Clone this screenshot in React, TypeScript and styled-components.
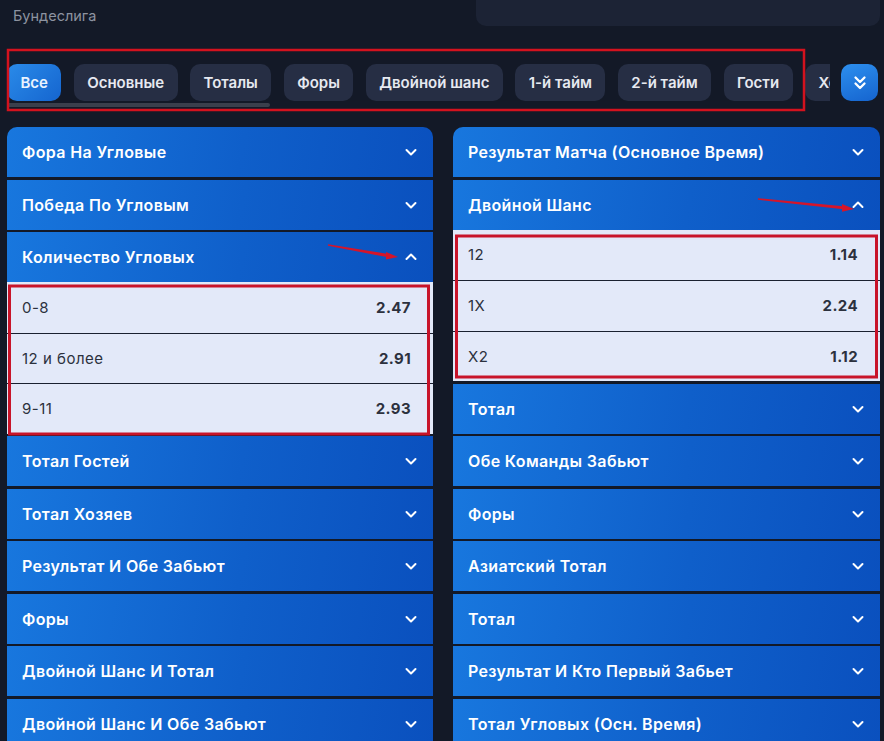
import React from 'react';
import styled, { createGlobalStyle } from 'styled-components';

const GlobalStyle = createGlobalStyle`
  html, body {
    margin: 0;
    padding: 0;
    background: #131927;
  }
  body {
    font-family: Inter, "Noto Sans", "Liberation Sans", sans-serif;
    overflow: hidden;
  }
  * {
    box-sizing: border-box;
  }
`;

type Option = { label: string; odds: string };
type Market = { title: string; open?: boolean; options?: Option[] };

const chips = ['Все', 'Основные', 'Тоталы', 'Форы', 'Двойной шанс', '1-й тайм', '2-й тайм', 'Гости', 'Хозяева'];

const leftMarkets: Market[] = [
  { title: 'Фора На Угловые' },
  { title: 'Победа По Угловым' },
  {
    title: 'Количество Угловых',
    open: true,
    options: [
      { label: '0-8', odds: '2.47' },
      { label: '12 и более', odds: '2.91' },
      { label: '9-11', odds: '2.93' }
    ]
  },
  { title: 'Тотал Гостей' },
  { title: 'Тотал Хозяев' },
  { title: 'Результат И Обе Забьют' },
  { title: 'Форы' },
  { title: 'Двойной Шанс И Тотал' },
  { title: 'Двойной Шанс И Обе Забьют' }
];

const rightMarkets: Market[] = [
  { title: 'Результат Матча (Основное Время)' },
  {
    title: 'Двойной Шанс',
    open: true,
    options: [
      { label: '12', odds: '1.14' },
      { label: '1X', odds: '2.24' },
      { label: 'X2', odds: '1.12' }
    ]
  },
  { title: 'Тотал' },
  { title: 'Обе Команды Забьют' },
  { title: 'Форы' },
  { title: 'Азиатский Тотал' },
  { title: 'Тотал' },
  { title: 'Результат И Кто Первый Забьет' },
  { title: 'Тотал Угловых (Осн. Время)' }
];

const Chevron = ({ up }: { up?: boolean }) => (
  <svg width="12" height="8" viewBox="0 0 12 8" fill="none">
    <path
      d={up ? 'M1.5 6l4.5-4.5 4.5 4.5' : 'M1.5 2l4.5 4.5 4.5-4.5'}
      stroke="#fff"
      strokeWidth="2"
      strokeLinecap="round"
      strokeLinejoin="round"
    />
  </svg>
);

const DoubleChevron = () => (
  <svg width="16" height="18" viewBox="0 0 16 18" fill="none">
    <path
      d="M3.5 3.5l4.5 4.5 4.5-4.5M3.5 9.5l4.5 4.5 4.5-4.5"
      stroke="#fff"
      strokeWidth="2.3"
      strokeLinecap="round"
      strokeLinejoin="round"
    />
  </svg>
);

const App = () => {
  const renderColumn = (markets: Market[]) => (
    <Column>
      {markets.map((m, i) => (
        <MarketBlock key={i}>
          <MarketHeader first={i === 0}>
            <span>{m.title}</span>
            <Chevron up={m.open} />
          </MarketHeader>
          {m.open && m.options && (
            <OptionList>
              {m.options.map((o) => (
                <OptionRow key={o.label}>
                  <OptionLabel>{o.label}</OptionLabel>
                  <Odds>{o.odds}</Odds>
                </OptionRow>
              ))}
            </OptionList>
          )}
        </MarketBlock>
      ))}
    </Column>
  );

  return (
    <Page>
      <GlobalStyle />
      <TopBar>
        <League>Бундеслига</League>
        <GhostPanel />
      </TopBar>

      <FilterBar>
        <ChipScroller>
          {chips.map((c, i) => (
            <Chip key={c} active={i === 0}>
              {c}
            </Chip>
          ))}
        </ChipScroller>
        <ExpandButton>
          <DoubleChevron />
        </ExpandButton>
      </FilterBar>
      <ScrollTrack>
        <ScrollThumb />
      </ScrollTrack>

      <Columns>
        {renderColumn(leftMarkets)}
        {renderColumn(rightMarkets)}
      </Columns>

      {/* red marks drawn over the screenshot */}
      <Annotations width="884" height="741" viewBox="0 0 884 741">
        <rect x="8" y="50" width="796" height="60" stroke="#d3121e" strokeWidth="2.5" fill="none" />
        <rect x="9.5" y="286" width="419" height="148" stroke="#c8142a" strokeWidth="3" fill="none" />
        <rect x="456.5" y="236" width="420" height="141" stroke="#c8142a" strokeWidth="3" fill="none" />
        <polygon points="328,244.2 390,254.2 389.4,257.6 328,245.8" fill="#d5152a" />
        <polygon points="386,252 398,257 386,259.6" fill="#d5152a" />
        <polygon points="758,198.2 846,206.4 845.6,209.6 758,199.8" fill="#d5152a" />
        <polygon points="842,204 854,209 842,211.8" fill="#d5152a" />
      </Annotations>
    </Page>
  );
};

const Page = styled.div`
  position: relative;
  width: 884px;
  height: 741px;
  overflow: hidden;
  background: #131927;
`;

const TopBar = styled.div`
  display: flex;
  justify-content: space-between;
  align-items: flex-start;
  height: 49px;
  padding: 0 4px 0 13px;
`;

const League = styled.div`
  margin-top: 7px;
  font-size: 14.5px;
  color: #8d93a0;
`;

const GhostPanel = styled.div`
  width: 404px;
  height: 26px;
  background: #1c2335;
  border-radius: 0 0 10px 10px;
`;

const FilterBar = styled.div`
  display: flex;
  align-items: center;
  margin-top: 15px;
  padding: 0 6px 0 7px;
  height: 37px;
`;

const ChipScroller = styled.div`
  display: flex;
  gap: 12.5px;
  width: 823px;
  overflow: hidden;
  flex: none;
`;

const Chip = styled.div<{ active?: boolean }>`
  flex: none;
  height: 37px;
  display: flex;
  align-items: center;
  padding: 0 13.4px;
  border-radius: 10px;
  font-size: 15px;
  font-weight: 600;
  color: ${(p) => (p.active ? '#eaf3ff' : '#e6e9f0')};
  background: ${(p) => (p.active ? 'linear-gradient(135deg, #2a8be9, #1565cf)' : '#262e44')};
`;

const ExpandButton = styled.div`
  margin-left: 11px;
  width: 37px;
  height: 37px;
  border-radius: 10px;
  display: flex;
  align-items: center;
  justify-content: center;
  background: linear-gradient(160deg, #2d8fee, #1564cf);
`;

const ScrollTrack = styled.div`
  margin: 2px 0 0 7px;
  width: 797px;
  height: 4px;
`;

const ScrollThumb = styled.div`
  width: 263px;
  height: 4px;
  border-radius: 2px;
  background: #3a3f4c;
`;

const Columns = styled.div`
  display: grid;
  grid-template-columns: 426px 427px;
  column-gap: 20px;
  align-items: start;
  margin-top: 20px;
  padding-left: 7px;
`;

const Column = styled.div`
  display: flex;
  flex-direction: column;
  gap: 2.5px;
`;

const MarketBlock = styled.div`
  display: flex;
  flex-direction: column;
`;

const MarketHeader = styled.div<{ first?: boolean }>`
  height: 50px;
  display: flex;
  align-items: center;
  justify-content: space-between;
  padding: 0 16px 0 15px;
  border-radius: ${(p) => (p.first ? '10px 10px 0 0' : '0')};
  background: linear-gradient(100deg, #1877de 0%, #0f5fca 55%, #0a50be 100%);
  color: #fff;
  font-size: 16px;
  font-weight: 600;
  letter-spacing: 0.35px;
`;

const OptionList = styled.div`
  display: flex;
  flex-direction: column;
  background: #e3e9f9;
`;

const OptionRow = styled.div`
  height: 50.5px;
  display: flex;
  align-items: center;
  justify-content: space-between;
  padding: 0 22px 0 15px;
  font-size: 15px;
  color: #2c313e;

  & + & {
    border-top: 1.5px solid #1a2030;
  }
`;

const OptionLabel = styled.span`
  font-weight: 400;
  letter-spacing: 0.5px;
`;

const Odds = styled.span`
  font-weight: 700;
  letter-spacing: 0.4px;
`;

const Annotations = styled.svg`
  position: absolute;
  top: 0;
  left: 0;
  pointer-events: none;
`;

export default App;
